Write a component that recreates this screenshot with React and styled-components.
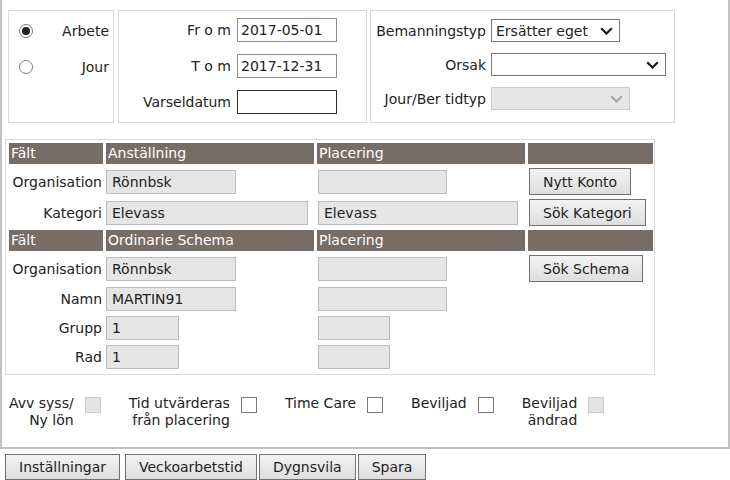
import styled, { createGlobalStyle } from "styled-components";

const GlobalStyle = createGlobalStyle`
  body {
    margin: 0;
    background: #fff;
    font-family: "DejaVu Sans", Verdana, sans-serif;
    font-size: 14px;
    color: #222;
  }
`;

function Chevron({ muted }) {
  return (
    <svg width="13" height="8" viewBox="0 0 13 8">
      <path
        d="M1.2 1.2 L6.5 6.5 L11.8 1.2"
        fill="none"
        stroke={muted ? "#a8a8a8" : "#1a1a1a"}
        strokeWidth="2.2"
      />
    </svg>
  );
}

function App() {
  return (
    <>
      <GlobalStyle />
      <Frame>
        <TopRow>
          <Panel $width={106}>
            <RadioGrid>
              <Radio $checked />
              <Label>Arbete</Label>
              <Radio />
              <Label>Jour</Label>
            </RadioGrid>
          </Panel>
          <Panel $width={249}>
            <DateGrid>
              <Label>Fr o m</Label>
              <DateInput defaultValue="2017-05-01" />
              <Label>T o m</Label>
              <DateInput defaultValue="2017-12-31" />
              <Label>Varseldatum</Label>
              <DateInput $dark defaultValue="" />
            </DateGrid>
          </Panel>
          <Panel $width={305}>
            <SelectGrid>
              <Label>Bemanningstyp</Label>
              <SelectBox $width={129}>
                <span>Ersätter eget</span>
                <Chevron />
              </SelectBox>
              <Label>Orsak</Label>
              <SelectBox $width={175}>
                <span />
                <Chevron />
              </SelectBox>
              <Label>Jour/Ber tidtyp</Label>
              <SelectBox $width={139} $disabled>
                <span />
                <Chevron muted />
              </SelectBox>
            </SelectGrid>
          </Panel>
        </TopRow>

        <Sheet>
          <Head>Fält</Head>
          <Head>Anställning</Head>
          <Head>Placering</Head>
          <Head />

          <Label>Organisation</Label>
          <ReadInput readOnly value="Rönnbsk" $width={130} />
          <ReadInput readOnly value="" $width={129} $shift />
          <Button $shift>Nytt Konto</Button>

          <Label>Kategori</Label>
          <ReadInput readOnly value="Elevass" $width={202} />
          <ReadInput readOnly value="Elevass" $width={200} $shift />
          <Button $shift>Sök Kategori</Button>

          <Head>Fält</Head>
          <Head>Ordinarie Schema</Head>
          <Head>Placering</Head>
          <Head />

          <Label>Organisation</Label>
          <ReadInput readOnly value="Rönnbsk" $width={130} />
          <ReadInput readOnly value="" $width={129} $shift />
          <Button $shift>Sök Schema</Button>

          <Label>Namn</Label>
          <ReadInput readOnly value="MARTIN91" $width={130} />
          <ReadInput readOnly value="" $width={129} $shift />
          <span />

          <Label>Grupp</Label>
          <ReadInput readOnly value="1" $width={73} />
          <ReadInput readOnly value="" $width={72} $shift />
          <span />

          <Label>Rad</Label>
          <ReadInput readOnly value="1" $width={73} />
          <ReadInput readOnly value="" $width={72} $shift />
          <span />
        </Sheet>

        <Flags>
          <Flag>
            <FlagLabel>
              Avv syss/
              <br />
              Ny lön
            </FlagLabel>
            <Check $disabled />
          </Flag>
          <Flag>
            <FlagLabel>
              Tid utvärderas
              <br />
              från placering
            </FlagLabel>
            <Check />
          </Flag>
          <Flag>
            <FlagLabel>Time Care</FlagLabel>
            <Check />
          </Flag>
          <Flag>
            <FlagLabel>Beviljad</FlagLabel>
            <Check />
          </Flag>
          <Flag>
            <FlagLabel>
              Beviljad
              <br />
              ändrad
            </FlagLabel>
            <Check $disabled />
          </Flag>
        </Flags>
      </Frame>

      <Actions>
        <Button $tall={false} $spaced>Inställningar</Button>
        <Button $tall={false}>Veckoarbetstid</Button>
        <Button $tall={false}>Dygnsvila</Button>
        <Button $tall={false}>Spara</Button>
      </Actions>
    </>
  );
}

const Frame = styled.div`
  width: 730px;
  height: 449px;
  box-sizing: border-box;
  border: 2px solid #c2c2c2;
  border-top: none;
  padding-top: 10px;
`;

const TopRow = styled.div`
  display: flex;
  gap: 4px;
  padding-left: 6px;

  & > div:last-child {
    margin-left: -1px;
  }
`;

const Panel = styled.div`
  width: ${(p) => p.$width}px;
  height: 113px;
  box-sizing: border-box;
  border: 1px solid #d9d9d9;
`;

const Label = styled.span`
  justify-self: end;
  white-space: nowrap;
  padding-right: 1px;
`;

const RadioGrid = styled.div`
  display: grid;
  grid-template-columns: 14px 1fr;
  grid-auto-rows: 36px;
  align-items: center;
  padding: 2px 3px 0 10px;
`;

const Radio = styled.span`
  width: 14px;
  height: 14px;
  box-sizing: border-box;
  border-radius: 50%;
  border: 1px solid #7a7a7a;
  background: #fff;
  display: flex;
  align-items: center;
  justify-content: center;

  &::after {
    content: "";
    width: 8px;
    height: 8px;
    border-radius: 50%;
    background: ${(p) => (p.$checked ? "#222" : "transparent")};
  }
`;

const DateGrid = styled.div`
  display: grid;
  grid-template-columns: 1fr 100px;
  grid-auto-rows: 24px;
  column-gap: 5px;
  row-gap: 12px;
  align-items: center;
  padding: 7px 29px 0 0;
`;

const DateInput = styled.input`
  width: 100px;
  height: 24px;
  box-sizing: border-box;
  margin: 0;
  padding: 0 3px;
  border: 1px solid ${(p) => (p.$dark ? "#2b2b2b" : "#8c8c8c")};
  border-radius: 0;
  font: inherit;
  color: #222;
  outline: none;
`;

const SelectGrid = styled.div`
  display: grid;
  grid-template-columns: 116px auto;
  grid-auto-rows: 23px;
  column-gap: 4px;
  row-gap: 11px;
  justify-items: start;
  align-items: stretch;
  padding-top: 8px;

  & > span {
    align-self: center;
  }
`;

const SelectBox = styled.div`
  width: ${(p) => p.$width}px;
  box-sizing: border-box;
  display: flex;
  align-items: center;
  justify-content: space-between;
  padding: 0 6px 0 4px;
  border: 1px solid ${(p) => (p.$disabled ? "#cdcdcd" : "#7a7a7a")};
  background: ${(p) => (p.$disabled ? "#e6e6e6" : "#fff")};
  white-space: nowrap;
`;

const Sheet = styled.div`
  margin: 16px 0 0 3px;
  width: 650px;
  box-sizing: border-box;
  border: 1px solid #d9d9d9;
  padding: 3px 1px 5px 3px;
  display: grid;
  grid-template-columns: 94px 208px 208px 125px;
  grid-template-rows: 21px 27px 27px 21px 27px 25px 25px 25px;
  column-gap: 3px;
  row-gap: 4px;
  align-items: center;
`;

const Head = styled.div`
  align-self: stretch;
  background: #776d67;
  color: #fff;
  line-height: 21px;
  padding-left: 2px;
  white-space: nowrap;
`;

const ReadInput = styled.input`
  width: ${(p) => p.$width}px;
  height: 24px;
  box-sizing: border-box;
  margin: 0 0 0 ${(p) => (p.$shift ? 1 : 0)}px;
  padding: 0 5px;
  border: 1px solid #bcbcbc;
  border-radius: 0;
  background: #e6e6e6;
  font: inherit;
  color: #222;
  outline: none;
`;

const Button = styled.button`
  height: ${(p) => (p.$tall === false ? 26 : 27)}px;
  justify-self: start;
  margin: 0 ${(p) => (p.$spaced ? 3 : 0)}px 0 ${(p) => (p.$shift ? 1 : 0)}px;
  padding: 0 13px;
  border: 1px solid #707070;
  border-radius: 0;
  background: linear-gradient(#f3f3f3, #dedede);
  font: inherit;
  color: #1e1e1e;
  white-space: nowrap;
`;

const Flags = styled.div`
  display: flex;
  align-items: flex-start;
  gap: 28px;
  margin: 20px 0 0 7px;
  line-height: 17px;
`;

const Flag = styled.div`
  display: flex;
  align-items: flex-start;
  gap: 11px;
`;

const FlagLabel = styled.span`
  text-align: right;
  white-space: nowrap;
`;

const Check = styled.span`
  width: 16px;
  height: 16px;
  box-sizing: border-box;
  margin-top: 2px;
  border: 1px solid ${(p) => (p.$disabled ? "#cacaca" : "#7a7a7a")};
  background: ${(p) => (p.$disabled ? "#e4e4e4" : "#fff")};
`;

const Actions = styled.div`
  display: flex;
  gap: 2px;
  margin-top: 5px;
  padding-left: 5px;
`;

export default App;
